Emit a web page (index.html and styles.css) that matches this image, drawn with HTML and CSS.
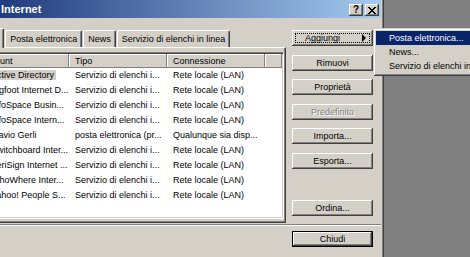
FILE: index.html
```html
<!DOCTYPE html>
<html lang="it">
<head>
  <meta charset="UTF-8" />
  <meta name="viewport" content="width=device-width, initial-scale=1.0">
  <title>Account Internet</title>
  <link rel="stylesheet" href="styles.css">
</head>
<body>
  <div class="window">
    <div class="titlebar">
      <span class="title">Account Internet</span>
      <div class="caption-buttons">
        <span class="cbtn">?</span>
        <span class="cbtn">
          <svg width="8" height="7" viewBox="0 0 8 7" shape-rendering="crispEdges">
            <path d="M0 0h2v1h-2zM6 0h2v1h-2zM1 1h2v1h-2zM5 1h2v1h-2zM2 2h4v1h-4zM3 3h2v1h-2zM2 4h4v1h-4zM1 5h2v1h-2zM5 5h2v1h-2zM0 6h2v1h-2zM6 6h2v1h-2z" fill="#000"/>
          </svg>
        </span>
      </div>
    </div>

    <div class="content">
      <div class="left">
        <div class="tabs">
          <span class="tab active">Tutto</span>
          <span class="tab">Posta elettronica</span>
          <span class="tab">News</span>
          <span class="tab">Servizio di elenchi in linea</span>
        </div>
        <div class="panel">
          <div class="list">
            <div class="row head">
              <span class="col c1">Account</span>
              <span class="col c2">Tipo</span>
              <span class="col c3">Connessione</span>
              <span class="col c4"></span>
            </div>
            <div class="row">
              <span class="col c1"><span class="label selected">Active Directory</span></span>
              <span class="col c2">Servizio di elenchi i...</span>
              <span class="col c3">Rete locale (LAN)</span>
            </div>
            <div class="row">
              <span class="col c1"><span class="label">Bigfoot Internet D...</span></span>
              <span class="col c2">Servizio di elenchi i...</span>
              <span class="col c3">Rete locale (LAN)</span>
            </div>
            <div class="row">
              <span class="col c1"><span class="label">InfoSpace Busin...</span></span>
              <span class="col c2">Servizio di elenchi i...</span>
              <span class="col c3">Rete locale (LAN)</span>
            </div>
            <div class="row">
              <span class="col c1"><span class="label">InfoSpace Intern...</span></span>
              <span class="col c2">Servizio di elenchi i...</span>
              <span class="col c3">Rete locale (LAN)</span>
            </div>
            <div class="row">
              <span class="col c1"><span class="label">Flavio Gerli</span></span>
              <span class="col c2">posta elettronica (pr...</span>
              <span class="col c3">Qualunque sia disp...</span>
            </div>
            <div class="row">
              <span class="col c1"><span class="label">Switchboard Inter...</span></span>
              <span class="col c2">Servizio di elenchi i...</span>
              <span class="col c3">Rete locale (LAN)</span>
            </div>
            <div class="row">
              <span class="col c1"><span class="label">VeriSign Internet ...</span></span>
              <span class="col c2">Servizio di elenchi i...</span>
              <span class="col c3">Rete locale (LAN)</span>
            </div>
            <div class="row">
              <span class="col c1"><span class="label">WhoWhere Inter...</span></span>
              <span class="col c2">Servizio di elenchi i...</span>
              <span class="col c3">Rete locale (LAN)</span>
            </div>
            <div class="row">
              <span class="col c1"><span class="label">Yahoo! People S...</span></span>
              <span class="col c2">Servizio di elenchi i...</span>
              <span class="col c3">Rete locale (LAN)</span>
            </div>
          </div>
        </div>
      </div>

      <div class="buttons">
        <button class="btn add">Aggiungi</button>
        <button class="btn">Rimuovi</button>
        <button class="btn">Proprietà</button>
        <button class="btn" disabled>Predefinito</button>
        <button class="btn">Importa...</button>
        <button class="btn">Esporta...</button>
        <button class="btn order">Ordina...</button>
      </div>
    </div>

    <div class="separator"></div>

    <div class="footer">
      <button class="btn default">Chiudi</button>
    </div>
  </div>

  <div class="menu">
    <div class="menu-item active">Posta elettronica...</div>
    <div class="menu-item">News...</div>
    <div class="menu-item">Servizio di elenchi in linea</div>
  </div>
</body>
</html>
```

FILE: styles.css
```css
body {
  margin: 0;
  width: 470px;
  height: 257px;
  overflow: hidden;
  background-color: #808080;
  font-family: "Liberation Sans", Arial, sans-serif;
  font-size: 9px;
  color: #000;
}

/* window frame, left part is off screen */
.window {
  margin-left: -60px;
  width: 444px;
  height: 270px;
  box-sizing: border-box;
  padding-right: 2px;
  background-color: #d4d0c8;
  border-right: 1px solid #404040;
  box-shadow: inset -1px 0 #808080;
}

.titlebar {
  display: flex;
  align-items: center;
  height: 18px;
  padding: 0 2px 0 14px;
  background: linear-gradient(to right, #0a246a, #a6caf0);
}
.title {
  flex: 1;
  color: #fff;
  font-weight: bold;
  font-size: 11px;
  white-space: nowrap;
}
.caption-buttons {
  display: flex;
  gap: 2px;
  margin-top: 2px;
}
.cbtn {
  display: flex;
  align-items: center;
  justify-content: center;
  width: 14px;
  height: 12px;
  background-color: #d4d0c8;
  box-shadow: inset -1px -1px #404040, inset 1px 1px #fff, inset -2px -2px #808080;
  font-weight: bold;
  font-size: 10px;
  line-height: 12px;
}

.content {
  display: flex;
  gap: 6px;
  padding: 10px 8px 0 26px;
}
.left {
  flex: 1;
}

/* tabs */
.tabs {
  display: flex;
  align-items: flex-end;
  gap: 1px;
  height: 19px;
  padding-left: 2px;
}
.tab {
  height: 17px;
  box-sizing: border-box;
  line-height: 16px;
  padding: 0 4px;
  white-space: nowrap;
  border-top: 1px solid #fff;
  border-left: 1px solid #fff;
  border-right: 1px solid #404040;
  box-shadow: inset -1px 0 #808080;
  border-radius: 2px 2px 0 0;
}
.tab.active {
  position: relative;
  z-index: 1;
  height: 20px;
  margin: 0 0 -1px -2px;
  padding: 0 8px;
  background-color: #d4d0c8;
}

.panel {
  height: 176px;
  box-sizing: border-box;
  padding: 4px 1px 2px 5px;
  border-top: 1px solid #fff;
  border-left: 1px solid #fff;
  border-right: 1px solid #404040;
  border-bottom: 1px solid #404040;
  box-shadow: inset -1px -1px #808080;
}

/* list view */
.list {
  height: 167px;
  box-sizing: border-box;
  padding: 1px;
  overflow: hidden;
  background-color: #fff;
  border: 1px solid;
  border-color: #808080 #fff #fff #808080;
  box-shadow: inset 1px 1px #404040, inset -1px -1px #d4d0c8;
}
.row {
  display: flex;
  height: 15px;
  line-height: 15px;
}
.col {
  flex: none;
  box-sizing: border-box;
  overflow: hidden;
  white-space: nowrap;
  padding-left: 6px;
}
.c1 { width: 95px; padding-left: 15px; }
.c2 { width: 98px; }
.c3 { width: 98px; }
.c4 { flex: 1; }
.row.head {
  height: 14px;
  line-height: 14px;
}
.row.head .col {
  padding-left: 6px;
  background-color: #d4d0c8;
  box-shadow: inset -1px -1px #808080, inset 1px 1px #fff;
}
.label {
  padding: 0 2px;
}
.label.selected {
  background-color: #d4d0c8;
}

/* buttons */
.buttons {
  display: flex;
  flex-direction: column;
  gap: 8.6px;
  width: 81px;
  height: 186px;
  margin-top: 2px;
}
.btn {
  display: block;
  position: relative;
  width: 81px;
  height: 16px;
  box-sizing: border-box;
  padding: 0;
  border: none;
  background-color: #d4d0c8;
  box-shadow: inset -1px -1px #404040, inset 1px 1px #fff, inset -2px -2px #808080;
  font-family: inherit;
  font-size: 9px;
  color: #000;
}
.btn:disabled {
  color: #808080;
  text-shadow: 1px 1px #fff;
}
.btn.add {
  padding-right: 20px;
}
.btn.add::before {
  content: "";
  position: absolute;
  top: 3px;
  left: 3px;
  right: 3px;
  bottom: 3px;
  border: 1px dotted #000;
}
.btn.add::after {
  content: "";
  position: absolute;
  top: 4px;
  right: 7px;
  border-left: 4px solid #000;
  border-top: 4px solid transparent;
  border-bottom: 4px solid transparent;
}
.btn.order {
  margin-top: auto;
}
.btn.default {
  border: 1px solid #000;
}

.separator {
  height: 0;
  margin-top: 1px;
  border-top: 1px solid #808080;
  border-bottom: 1px solid #fff;
}
.footer {
  display: flex;
  justify-content: flex-end;
  padding: 5px 8px 0 0;
}

/* popup menu of "Aggiungi" */
.menu {
  position: absolute;
  left: 373px;
  top: 28px;
  width: 130px;
  padding: 3px;
  background-color: #d4d0c8;
  box-shadow: inset 1px 1px #d4d0c8, inset -1px -1px #404040, inset 2px 2px #fff, inset -2px -2px #808080;
}
.menu-item {
  height: 14px;
  line-height: 14px;
  padding-left: 13px;
  white-space: nowrap;
}
.menu-item.active {
  background-color: #0a246a;
  color: #fff;
}
```
